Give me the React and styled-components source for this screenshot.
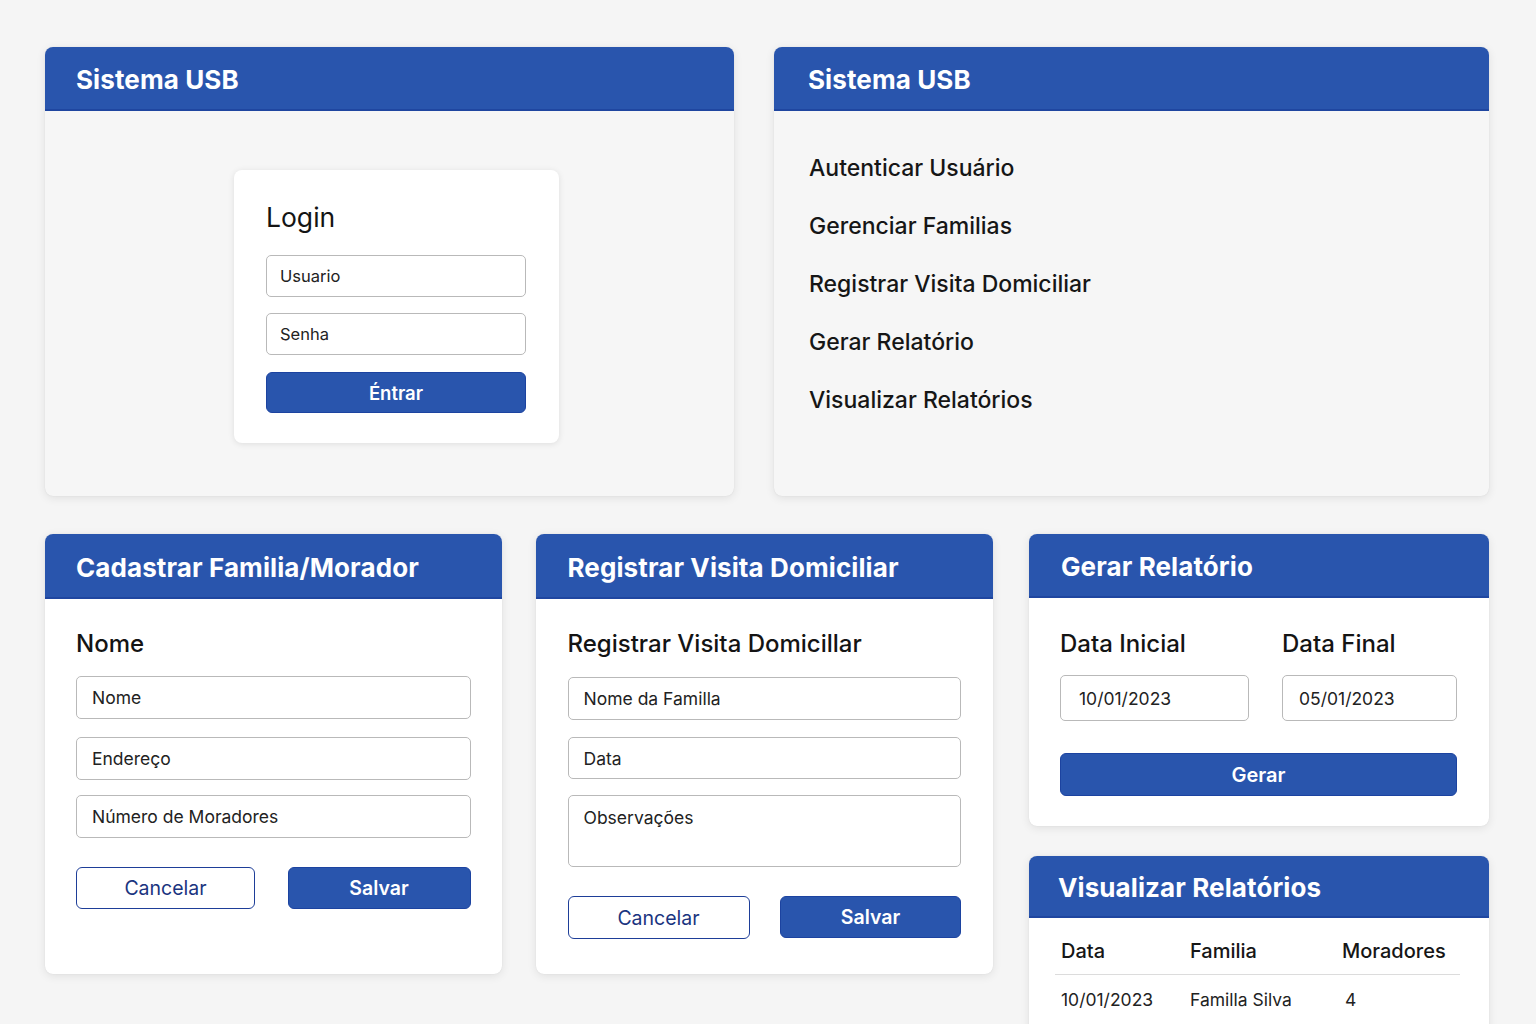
import React from 'react';
import styled, { createGlobalStyle } from 'styled-components';

const GlobalStyle = createGlobalStyle`
  html, body {
    margin: 0;
    padding: 0;
    background: #f5f5f5;
  }
  body {
    font-family: Inter, Roboto, "Liberation Sans", sans-serif;
    color: #161616;
  }
  * { box-sizing: border-box; }
`

const Page = styled.div`
  width: 1536px;
  height: 1024px;
  overflow: hidden;
  padding: 47px 47px 0 45px;
  display: flex;
  flex-direction: column;
  gap: 38px;
`

const Row = styled.div`
  display: flex;
  align-items: flex-start;
  gap: ${p => p.gap || 40}px;
`

const Column = styled.div`
  display: flex;
  flex-direction: column;
  gap: 30px;
  margin-left: 2px;
`

const Card = styled.section`
  width: ${p => p.w}px;
  height: ${p => (p.h ? `${p.h}px` : 'auto')};
  background: ${p => (p.muted ? '#f6f6f6' : '#ffffff')};
  border-radius: 8px;
  overflow: hidden;
  box-shadow: 0 2px 10px rgba(0, 0, 0, 0.09), 0 0 1px rgba(0, 0, 0, 0.12);
  display: flex;
  flex-direction: column;
`

const CardHeader = styled.header`
  height: ${p => p.h || 64}px;
  flex-shrink: 0;
  background: #2955ad;
  border-bottom: 2px solid #1f46a0;
  display: flex;
  align-items: center;
  padding: 3px 0 0 ${p => p.pad || 31}px;
  color: #fff;
  font-size: 26px;
  font-weight: 700;
  letter-spacing: 0.1px;
`

const CardBody = styled.div`
  flex: 1;
  padding: ${p => p.pad || '0'};
  display: flex;
  flex-direction: column;
`

/* login */

const LoginWrap = styled.div`
  flex: 1;
  display: flex;
  padding: 59px 0 0 189px;
`

const LoginBox = styled.div`
  width: 325px;
  height: 273px;
  background: #fff;
  border-radius: 8px;
  box-shadow: 0 1px 6px rgba(0, 0, 0, 0.1);
  padding: 30px 33px 0 32px;
  display: flex;
  flex-direction: column;
`

const LoginTitle = styled.h2`
  margin: 0 0 21px;
  font-size: 26.5px;
  font-weight: 400;
  line-height: 34px;
  color: #141414;
`

const Field = styled.div`
  width: ${p => (p.w ? `${p.w}px` : '100%')};
  height: ${p => p.h || 42}px;
  border: 1px solid #b9b9b9;
  border-radius: 5px;
  background: #fff;
  display: flex;
  align-items: ${p => (p.area ? 'flex-start' : 'center')};
  padding: ${p => (p.area ? '11px 0 0' : '0')} ${p => p.px || 15}px;
  font-size: ${p => p.fs || 17.5}px;
  color: #222;
  margin-bottom: ${p => p.mb || 0}px;
  flex-shrink: 0;
`

const Button = styled.div`
  width: ${p => (p.w ? `${p.w}px` : '100%')};
  height: ${p => p.h || 41}px;
  border-radius: 6px;
  display: flex;
  align-items: center;
  justify-content: center;
  font-size: ${p => p.fs || 19.5}px;
  font-weight: ${p => (p.outline ? 400 : 600)};
  background: ${p => (p.outline ? '#fff' : '#2955ad')};
  color: ${p => (p.outline ? '#1a3480' : '#fff')};
  border: ${p => (p.outline ? '1.5px solid #1e3e98' : '1px solid #1c43a0')};
  flex-shrink: 0;
`

/* menu */

const Menu = styled.ul`
  list-style: none;
  margin: 0;
  padding: 43px 0 0 35px;
  display: flex;
  flex-direction: column;
  gap: 29px;
`

const MenuItem = styled.li`
  font-size: 23px;
  font-weight: 500;
  line-height: 29px;
  color: #161616;
`

/* forms */

const Label = styled.div`
  font-size: 24px;
  font-weight: 500;
  line-height: 30px;
  color: #141414;
  margin-bottom: ${p => p.mb || 17}px;
`

const ButtonRow = styled.div`
  display: flex;
  justify-content: space-between;
  margin-top: ${p => p.mt || 30}px;
`

const DateGrid = styled.div`
  display: flex;
  gap: 33px;
`

const DateCol = styled.div`
  display: flex;
  flex-direction: column;
`

const SubmitRow = styled.div`
  margin-top: 32px;
`

/* table */

const Table = styled.table`
  width: 405px;
  border-collapse: collapse;
  margin-left: -6px;
`

const Th = styled.th`
  text-align: left;
  font-size: 20px;
  font-weight: 500;
  color: #161616;
  padding: 21px 0 11px 6px;
  border-bottom: 1px solid #dcdcdc;
  width: ${p => p.w}px;
`

const Td = styled.td`
  font-size: 17.5px;
  color: #222;
  padding: 14px 0 0 ${p => p.pl || 6}px;
`

export default function App() {
  return (
    <>
      <GlobalStyle />
      <Page>
        <Row gap={40}>
          <Card w={689} h={449} muted>
            <CardHeader h={64}>Sistema USB</CardHeader>
            <LoginWrap>
              <LoginBox>
                <LoginTitle>Login</LoginTitle>
                <Field h={42} mb={16} px={13} fs={16.5}>Usuario</Field>
                <Field h={42} mb={17} px={13} fs={16.5}>Senha</Field>
                <Button h={41} fs={18.5}>Éntrar</Button>
              </LoginBox>
            </LoginWrap>
          </Card>
          <Card w={715} h={449} muted>
            <CardHeader h={64} pad={34}>Sistema USB</CardHeader>
            <Menu>
              <MenuItem>Autenticar Usuário</MenuItem>
              <MenuItem>Gerenciar Familias</MenuItem>
              <MenuItem>Registrar Visita Domiciliar</MenuItem>
              <MenuItem>Gerar Relatório</MenuItem>
              <MenuItem>Visualizar Relatórios</MenuItem>
            </Menu>
          </Card>
        </Row>

        <Row gap={34}>
          <Card w={457} h={440}>
            <CardHeader h={65}>Cadastrar Familia/Morador</CardHeader>
            <CardBody pad="30px 31px 0 31px">
              <Label mb={17}>Nome</Label>
              <Field h={43} mb={18}>Nome</Field>
              <Field h={43} mb={15}>Endereço</Field>
              <Field h={43}>Número de Moradores</Field>
              <ButtonRow mt={29}>
                <Button outline w={179} h={42}>Cancelar</Button>
                <Button w={183} h={42}>Salvar</Button>
              </ButtonRow>
            </CardBody>
          </Card>
          <Card w={458} h={440}>
            <CardHeader h={65} pad={32}>Registrar Visita Domiciliar</CardHeader>
            <CardBody pad="30px 32px 0 32px">
              <Label mb={18}>Registrar Visita Domicillar</Label>
              <Field h={43} mb={17}>Nome da Familla</Field>
              <Field h={42} mb={16}>Data</Field>
              <Field h={72} area>Observações</Field>
              <ButtonRow mt={29}>
                <Button outline w={182} h={43}>Cancelar</Button>
                <Button w={181} h={42}>Salvar</Button>
              </ButtonRow>
            </CardBody>
          </Card>
          <Column>
            <Card w={460} h={292}>
              <CardHeader h={64} pad={32}>Gerar Relatório</CardHeader>
              <CardBody pad="31px 32px 0 31px">
                <DateGrid>
                  <DateCol>
                    <Label mb={16}>Data Inicial</Label>
                    <Field w={189} h={46} px={18}>10/01/2023</Field>
                  </DateCol>
                  <DateCol>
                    <Label mb={16}>Data Final</Label>
                    <Field w={175} h={46} px={16}>05/01/2023</Field>
                  </DateCol>
                </DateGrid>
                <SubmitRow>
                  <Button h={43} fs={20}>Gerar</Button>
                </SubmitRow>
              </CardBody>
            </Card>
            <Card w={460}>
              <CardHeader h={62} pad={29}>Visualizar Relatórios</CardHeader>
              <CardBody pad="0 0 40px 32px">
                <Table>
                  <thead>
                    <tr>
                      <Th w={129}>Data</Th>
                      <Th w={152}>Familia</Th>
                      <Th>Moradores</Th>
                    </tr>
                  </thead>
                  <tbody>
                    <tr>
                      <Td>10/01/2023</Td>
                      <Td>Familla Silva</Td>
                      <Td pl={9}>4</Td>
                    </tr>
                  </tbody>
                </Table>
              </CardBody>
            </Card>
          </Column>
        </Row>
      </Page>
    </>
  );
}
